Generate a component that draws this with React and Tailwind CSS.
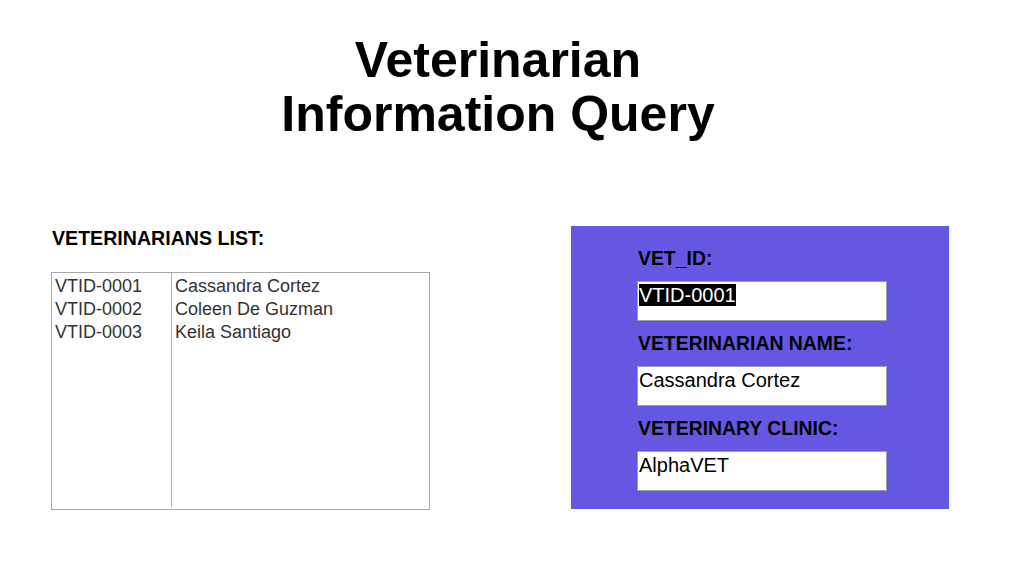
const VETS = [
  { id: 'VTID-0001', name: 'Cassandra Cortez', clinic: 'AlphaVET' },
  { id: 'VTID-0002', name: 'Coleen De Guzman', clinic: '' },
  { id: 'VTID-0003', name: 'Keila Santiago', clinic: '' },
]

const font = { fontFamily: '"Liberation Sans", Arial, Helvetica, sans-serif' }

function Field({ label, value, selected }) {
  return (
    <div className="flex flex-col">
      <div className="pl-[1px] text-[19.4px] leading-[22px] font-bold text-black">{label}</div>
      <div className="mt-[12px] w-[250px] h-[40px] bg-white border border-[#9c9cb0] text-[20px] leading-[24px] text-black pl-[1px] pt-[1px]">
        {selected ? <span className="bg-black text-white">{value}</span> : value}
      </div>
    </div>
  )
}

export default function App() {
  const current = VETS[0]
  return (
    <div className="w-[1012px] h-[585px] bg-white overflow-hidden" style={font}>
      <div className="w-[996px] pt-[33px]">
        <h1 className="text-center text-[50px] leading-[54px] font-bold text-black">
          Veterinarian<br />Information Query
        </h1>
      </div>

      <div className="flex items-start mt-[85px] pl-[51px]">
        <div className="flex flex-col pt-[1px]">
          <div className="pl-[1px] text-[19.6px] leading-[22px] font-bold text-black">VETERINARIANS LIST:</div>
          <div className="mt-[23px] w-[379px] h-[238px] border border-[#a8a8a8] flex pb-[2px]">
            <div className="w-[120px] border-r border-[#b4b4b4] pt-[2px] pl-[3px] text-[18px] leading-[23px] text-[#333]">
              {VETS.map(v => <div key={v.id}>{v.id}</div>)}
            </div>
            <div className="flex-1 pt-[2px] pl-[3px] text-[18px] leading-[23px] text-[#333]">
              {VETS.map(v => <div key={v.id}>{v.name}</div>)}
            </div>
          </div>
        </div>

        <div className="ml-[141px] w-[378px] h-[283px] bg-[#6557e2] pt-[21px] pl-[66px] flex flex-col gap-[11px]">
          <Field label="VET_ID:" value={current.id} selected />
          <Field label="VETERINARIAN NAME:" value={current.name} />
          <Field label="VETERINARY CLINIC:" value={current.clinic} />
        </div>
      </div>
    </div>
  )
}
